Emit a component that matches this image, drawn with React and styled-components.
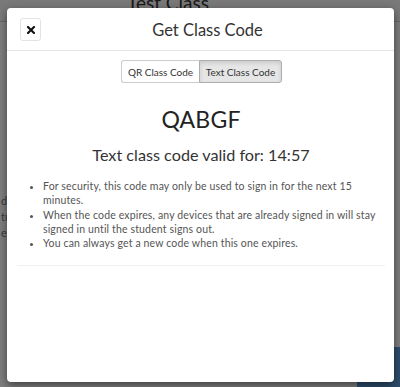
import React from "react";
import styled, { createGlobalStyle } from "styled-components";

const Global = createGlobalStyle`
  html, body { margin: 0; padding: 0; }
  body {
    width: 400px;
    height: 387px;
    overflow: hidden;
    background: #ffffff;
    font-family: Lato, "Open Sans", sans-serif;
  }
`;

const Page = styled.div`
  position: relative;
  width: 400px;
  height: 387px;
  overflow: hidden;
  background: #fdfdfd;
`;

const PageHeader = styled.header`
  height: 21px;
  background: #f3f3f3;
  border-bottom: 1px solid #d0d0d0;
  display: flex;
  justify-content: center;
  overflow: hidden;
`;

const PageTitle = styled.h1`
  margin: -7px 0 0 -64px;
  font-size: 19px;
  font-weight: 400;
  color: #333;
  line-height: 20px;
`;

const PageBody = styled.div`
  display: flex;
  flex-direction: column;
  padding: 171px 0 0 1px;
  font-size: 11px;
  line-height: 16px;
  color: #777;
`;

const BgButton = styled.div`
  position: absolute;
  right: 0;
  bottom: 0;
  width: 43px;
  height: 40px;
  background: #5a9ad8;
`;

const Overlay = styled.div`
  position: absolute;
  inset: 0;
  background: rgba(0, 0, 0, 0.5);
`;

const Modal = styled.div`
  position: absolute;
  left: 7px;
  top: 8px;
  width: 387px;
  height: 374px;
  background: #fff;
  border-radius: 4px;
  box-shadow: 0 3px 9px rgba(0, 0, 0, 0.5);
  display: flex;
  flex-direction: column;
  overflow: hidden;
`;

const ModalHeader = styled.div`
  display: flex;
  align-items: center;
  padding: 10px 13px 9px 13px;
  border-bottom: 1px solid #e5e5e5;
`;

const CloseButton = styled.button`
  width: 21px;
  height: 23px;
  padding: 0;
  display: flex;
  align-items: center;
  justify-content: center;
  background: #fff;
  border: 1px solid #e3e3e3;
  border-radius: 3px;
  cursor: pointer;
`;

const CloseIcon = () => (
  <svg width="8" height="8" viewBox="0 0 8 8" aria-hidden="true">
    <path d="M1 1 L7 7 M7 1 L1 7" stroke="#111" strokeWidth="2.1" strokeLinecap="square" fill="none" />
  </svg>
);

const Title = styled.h4`
  flex: 1;
  margin: 0 7px 0 0;
  text-align: center;
  font-size: 16.5px;
  font-weight: 400;
  color: #333;
  line-height: 20px;
`;

const ModalBody = styled.div`
  display: flex;
  flex-direction: column;
  align-items: stretch;
  padding: 9px 9px 0 10px;
`;

const ToggleGroup = styled.div`
  align-self: center;
  display: flex;
  margin-left: 1px;
`;

const ToggleButton = styled.button`
  height: 23px;
  padding: 0;
  white-space: nowrap;
  font-family: Lato, sans-serif;
  font-size: 10px;
  color: #333;
  background: ${(p) => (p.$active ? "#e6e6e6" : "#fff")};
  border: 1px solid ${(p) => (p.$active ? "#adadad" : "#ccc")};
  box-shadow: ${(p) => (p.$active ? "inset 0 2px 4px rgba(0,0,0,0.125)" : "none")};
  border-radius: 0;
  cursor: pointer;
  &:first-child {
    border-radius: 3px 0 0 3px;
    border-right: none;
    width: 78px;
  }
  &:last-child {
    border-radius: 0 3px 3px 0;
    width: 83px;
  }
`;

const Code = styled.div`
  margin-top: 23px;
  text-align: center;
  font-size: 23px;
  line-height: 1.2;
  color: #222;
  letter-spacing: 0.2px;
`;

const Timer = styled.div`
  margin-top: 11px;
  text-align: center;
  font-size: 16.2px;
  line-height: 1.2;
  color: #333;
`;

const Notes = styled.ul`
  margin: 15px 0 0 0;
  padding-left: 26px;
  font-size: 10.5px;
  letter-spacing: 0.15px;
  line-height: 14.3px;
  color: #555;
`;

const Divider = styled.hr`
  margin: 14px 0 0 0;
  border: 0;
  border-top: 1px solid #f0f0f0;
`;

export default function App() {
  return (
    <>
      <Global />
      <Page>
        <PageHeader>
          <PageTitle>Test Class</PageTitle>
        </PageHeader>
        <PageBody>
          <span>dashboard</span>
          <span>tudents</span>
          <span>exercises</span>
        </PageBody>
        <BgButton />
        <Overlay />
        <Modal>
          <ModalHeader>
            <CloseButton aria-label="Close">
              <CloseIcon />
            </CloseButton>
            <Title>Get Class Code</Title>
          </ModalHeader>
          <ModalBody>
            <ToggleGroup>
              <ToggleButton>QR Class Code</ToggleButton>
              <ToggleButton $active>Text Class Code</ToggleButton>
            </ToggleGroup>
            <Code>QABGF</Code>
            <Timer>Text class code valid for: 14:57</Timer>
            <Notes>
              <li>For security, this code may only be used to sign in for the next 15 minutes.</li>
              <li>When the code expires, any devices that are already signed in will stay signed in until the student signs out.</li>
              <li>You can always get a new code when this one expires.</li>
            </Notes>
            <Divider />
          </ModalBody>
        </Modal>
      </Page>
    </>
  );
}
